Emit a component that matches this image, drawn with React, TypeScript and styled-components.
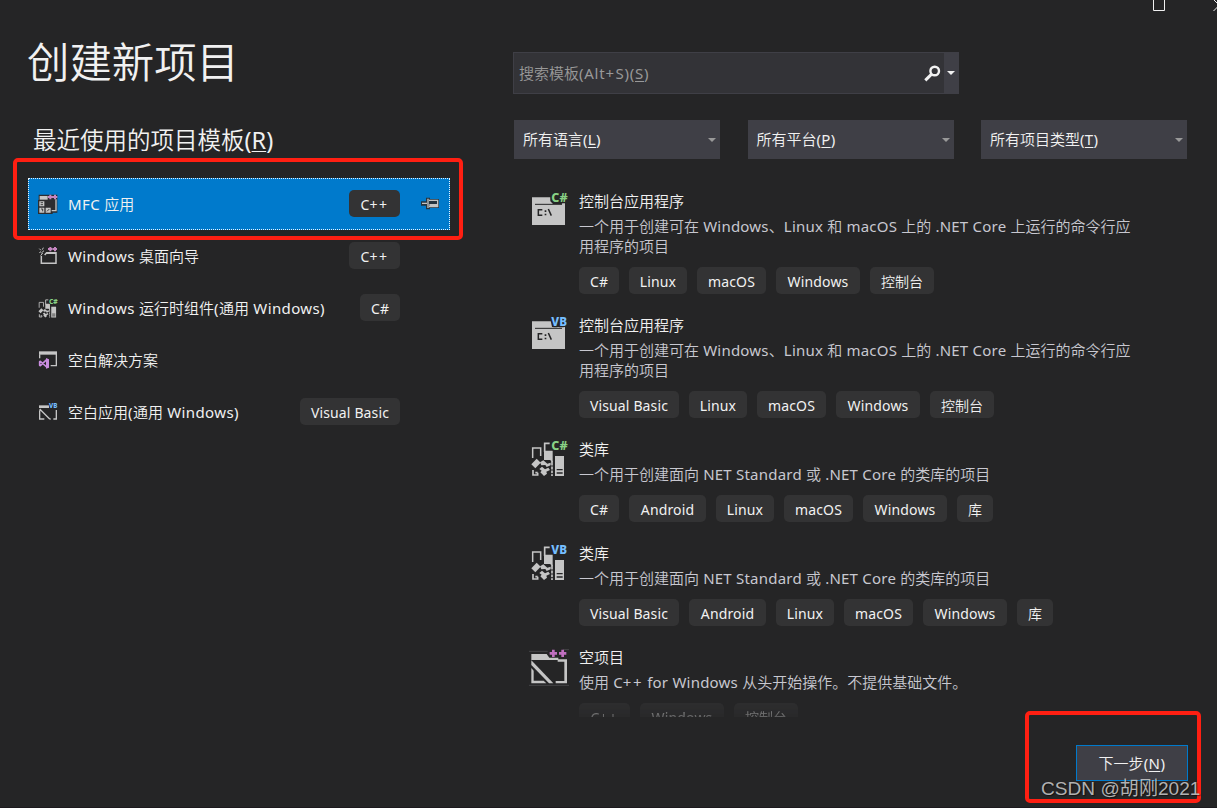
import React from "react";
import styled, { createGlobalStyle } from "styled-components";

const Global = createGlobalStyle`
  * { box-sizing: border-box; }
  body { margin: 0; background: #252526; overflow: hidden; }
`;

const Window = styled.div`
  position: relative;
  width: 1217px;
  height: 808px;
  overflow: hidden;
  background: #252526;
  border-bottom: 1px solid #1d1a1e;
  color: #f1f1f1;
  font-family: "Noto Sans", "Noto Sans CJK SC", sans-serif;
  font-size: 15px;
  line-height: 20px;
  white-space: nowrap;
  display: grid;
  grid-template-columns: 513px 1fr;
`;

const LatinRun = styled.span`
  letter-spacing: var(--latin-spacing, 0.024em);
`;

const PlusRun = styled.span`
  letter-spacing: 0.1em;
`;

const Han = styled.span`
  font-family: "Noto Sans CJK SC", sans-serif;
  font-weight: 350;
  line-height: 0;
`;

const Text = ({ children }: { children: string }) => (
  <span>
    {(children.match(/\++|[\x00-\x2a\x2c-\x7f]+|[^\x00-\x7f]+/g) || []).map((run, i) =>
      run[0] === "+" ? (
        <PlusRun key={i}>{run}</PlusRun>
      ) : /^[\x00-\x7f]/.test(run) ? (
        <LatinRun key={i}>{run}</LatinRun>
      ) : (
        <Han key={i}>{run}</Han>
      )
    )}
  </span>
);

const AccessKey = styled.span`
  text-decoration: underline;
  text-decoration-thickness: 1px;
  text-underline-offset: 2px;
`;

const LabelText = styled.span`
  letter-spacing: var(--label-spacing, 0);
`;

const Label = ({ text, hotkey }: { text: string; hotkey: string }) => (
  <span>
    <Text>{text}</Text>
    <LabelText>(<AccessKey>{hotkey}</AccessKey>)</LabelText>
  </span>
);

const LeftPane = styled.section`
  padding: 32px 0 0 28px;
`;

const Title = styled.h1`
  margin: 0 0 0 -1px;
  height: 60px;
  font-size: 42.4px;
  line-height: 60px;
  font-weight: 400;
`;

const Subtitle = styled.h2`
  margin: 32px 0 0 5px;
  height: 32px;
  font-size: 23.5px;
  line-height: 32px;
  font-weight: 400;
`;

const RecentList = styled.div`
  margin-top: 22px;
  width: 422px;
`;

const Tag = styled.span<{ $width: number }>`
  --latin-spacing: 0.01em;
  display: inline-flex;
  align-items: center;
  justify-content: center;
  width: ${(p) => p.$width}px;
  height: 27px;
  border-radius: 5px;
  background: #333334;
  font-size: 14px;
  padding-top: 3px;
`;

const RecentRow = styled.div<{ $selected?: boolean }>`
  display: flex;
  align-items: center;
  height: 52px;
  padding: 0 10px;
  background: ${(p) => (p.$selected ? "#007acc" : "transparent")};
  outline: ${(p) => (p.$selected ? "1px dotted #e8f4ff" : "none")};
  outline-offset: -1px;

  ${Tag} {
    margin-bottom: 1px;
  }
`;

const RecentName = styled.span`
  --latin-spacing: 0.026em;
  flex: 1;
  margin-left: 10px;
`;

const PinSlot = styled.span`
  width: 40px;
  height: 20px;
  padding: 3px 0 0 21px;
  display: flex;
`;

const TAG_WIDTHS: Record<string, number> = {
  "C#": 40,
  "C++": 51,
  Linux: 58,
  macOS: 69,
  Windows: 84,
  Android: 77,
  "Visual Basic": 100,
  控制台: 64,
  库: 36,
};

const TagChip = ({ name }: { name: string }) => (
  <Tag $width={TAG_WIDTHS[name]}>
    <Text>{name}</Text>
  </Tag>
);

const RightPane = styled.section`
  padding-top: 52px;
`;

const SearchBox = styled.div`
  display: flex;
  width: 446px;
  height: 42px;
  border: 1px solid #3f3f46;
  background: #333337;
  color: #999999;
  align-items: center;
  padding-left: 5px;
`;

const SearchText = styled.span`
  --latin-spacing: 0.05em;
  --label-spacing: 0.05em;
  flex: 1;
`;

const SearchDrop = styled.span`
  width: 14px;
  height: 40px;
  margin-left: 3px;
  background: #3f3f46;
  display: flex;
  align-items: center;
  justify-content: center;
`;

const Caret = styled.i<{ $color: string }>`
  border: 4px solid transparent;
  border-top-color: ${(p) => p.$color};
  border-bottom: 0;
`;

const Filters = styled.div`
  --label-spacing: 0.02em;
  display: grid;
  grid-template-columns: 206px 206px 206px;
  column-gap: 27.5px;
  margin: 26px 0 0 1px;
`;

const Combo = styled.div`
  display: flex;
  align-items: center;
  justify-content: space-between;
  height: 39px;
  padding: 0 4px 0 9px;
  background: #3f3f46;

  > span {
    margin-bottom: 1px;
  }
`;

const TemplateList = styled.div`
  height: 526px;
  margin-top: 32px;
  padding-left: 17px;
  overflow: hidden;
`;

const TemplateItem = styled.article`
  display: flex;
  margin-bottom: 21px;
`;

const IconSlot = styled.div`
  width: 49px;
  height: 40px;
  margin-top: -1px;
`;

const TemplateName = styled.div`
  height: 20px;
`;

const Description = styled.div`
  --latin-spacing: 0.015em;
  margin-top: 5px;
  color: #c8c8d0;
`;

const TagRow = styled.div<{ $faded?: boolean }>`
  display: flex;
  gap: 10px;
  margin-top: 11px;
  ${(p) => p.$faded && "mask-image: linear-gradient(rgba(0,0,0,.6), rgba(0,0,0,.28) 15px);"}
`;

const NextButton = styled.button`
  --label-spacing: 0.03em;
  position: absolute;
  left: 1076px;
  top: 745px;
  width: 112px;
  height: 36px;
  padding: 0;
  border: 1px solid #007acc;
  background: #3f3f46;
  color: #f1f1f1;
  font: inherit;
`;

const Marker = styled.div<{ $x: number; $y: number; $w: number; $h: number }>`
  position: absolute;
  left: ${(p) => p.$x}px;
  top: ${(p) => p.$y}px;
  width: ${(p) => p.$w}px;
  height: ${(p) => p.$h}px;
  border: 4px solid #ff1f12;
  border-radius: 5px;
`;

const Watermark = styled.div`
  position: absolute;
  left: 1041px;
  top: 777px;
  color: rgba(205, 205, 205, 0.85);
  font: 19.1px/24px "Liberation Sans", "Noto Sans CJK SC", sans-serif;
  text-shadow: 1px 1px 1px rgba(0, 0, 0, 0.5);
`;

const WindowControls = styled.svg`
  position: absolute;
  right: 0;
  top: 0;
`;

const G = "#c5c5c5";
const BG = "#252526";

const Small = ({ box, children }: { box: string; children: React.ReactNode }) => (
  <svg width="20" height="20" viewBox={box} overflow="visible">{children}</svg>
);
const Large = ({ box, children }: { box: string; children: React.ReactNode }) => (
  <svg width="40" height="40" viewBox={box} overflow="visible">{children}</svg>
);

const Badge = ({ x, y, size, width, text, color }: { x: number; y: number; size: number; width: number; text: string; color: string }) => (
  <text x={x} y={y} fontSize={size} textLength={width} lengthAdjust="spacingAndGlyphs" fontFamily="Noto Sans" fontWeight="800"
    fill={color} stroke={BG} strokeWidth={size / 5} paintOrder="stroke">{text}</text>
);

const LangBadge = ({ lang, y }: { lang: string; y: number }) =>
  lang === "C#" ? (
    <Badge x={94} y={y} size={38} width={49} text="C#" color="#89d185" />
  ) : (
    <Badge x={94} y={y} size={38} width={47} text="VB" color="#75beff" />
  );

const MfcIcon = () => (
  <Small box="114 132 60 60">
    <path d="M116 134h56v54h-14v4h-44v-42h2z" fill="#2d2d30" />
    <path d="M119 138h24v11h-24z" fill={G} />
    <path d="M168 148v34h-13" fill="none" stroke={G} strokeWidth="4" />
    <path d="M118 154h15v15h-15zM118 173h15v15h-15zM137 173h15v15h-15z" fill={G} />
    <path d="M122 158h7M122 164h7M123 177h5v7M141 184l7-7" fill="none" stroke={BG} strokeWidth="2.5" />
    <path d="M151 134v14M144 141h14M165 134v14M158 141h14" stroke="#c586c0" strokeWidth="6" />
  </Small>
);

const WizardIcon = () => (
  <Small box="114 288 60 60">
    <path d="M124 318v22h44v-32h-28l-6 7M140 310h28" fill="none" stroke={G} strokeWidth="4.5" />
    <path d="M118 296l5 5M130 293l-3 6M118 308l5-3M132 302l-8 7M128 309l-6 8" stroke={G} strokeWidth="3" />
    <path d="M151 291v13M144 297h13M165 291v13M158 297h13" stroke="#c586c0" strokeWidth="6" />
  </Small>
);

const LibraryShape = () => (
  <>
    <path d="M38 84V54h24v24" fill="none" stroke={G} strokeWidth="4.5" />
    <path d="M74 66V40h15" fill="none" stroke={G} strokeWidth="5" />
    <path d="M72 62h26v34l-8-6H72z" fill={G} />
    <path d="M105 78h27v60h-27z" fill={G} />
    <path d="M110 119h18M110 129h18" stroke={BG} strokeWidth="4" />
    <path d="M34 103l16-17 12 12-16 17z" fill={G} />
    <path d="M60 97l10-6 12 10 10-3v8l-12 5-4-6-12 1z" fill={G} />
    <path d="M58 117l8-7 9 8 10-5 5 7-11 5 2 6-9 7-11-11 4-5z" fill={G} />
    <path d="M39 120v15h14v-7M46 128h7M96 92v46" fill="none" stroke={G} strokeWidth="5" />
    <path d="M92 108h8M92 120h8M92 131h8" stroke={BG} strokeWidth="3" />
  </>
);

const ComponentIcon = () => (
  <Small box="54 39 60 60">
    <g transform="translate(37 23) scale(.54)"><LibraryShape /></g>
    <Badge x={87} y={56} size={21} width={26} text="C#" color="#89d185" />
  </Small>
);

const SolutionIcon = () => (
  <Small box="54 195 60 60">
    <path d="M57 199h54v10H57z" fill={G} />
    <path d="M59 208v12M109 206v36H92" fill="none" stroke={G} strokeWidth="4" />
    <path d="M80 224L61 242l-2-1v-11l2-1 19 17" fill="none" stroke="#ca8de0" strokeWidth="5" strokeLinejoin="round" />
    <path d="M78 219l9 4v25l-9 3z" fill="#ca8de0" />
  </Small>
);

const BlankAppIcon = () => (
  <Small box="54 351 60 60">
    <path d="M57 361h30v8H57z" fill={G} />
    <path d="M59 376v26h14M59 372l30 30M89 402h3M100 402h9v-27" fill="none" stroke={G} strokeWidth="4" />
    <Badge x={87} y={368} size={21} width={25} text="VB" color="#75beff" />
  </Small>
);

const ConsoleIcon = ({ lang }: { lang: string }) => (
  <Large box="30 30 120 120">
    <path d="M36 52h99v83H36z" fill={G} />
    <path d="M45 73h81" stroke={BG} strokeWidth="3" />
    <path d="M67 89H55v17h12M85 87l9 20" fill="none" stroke={BG} strokeWidth="4.5" />
    <path d="M74 91h5v5h-5zM74 101h5v5h-5z" fill={BG} />
    <path d={lang === "VB" ? "M91 45h50v24H96z" : "M91 45h50v22h-12l-4 5h-26l-8-8z"} fill={BG} />
    <LangBadge lang={lang} y={66} />
  </Large>
);

const LibraryIcon = ({ lang }: { lang: string }) => (
  <Large box="30 24 120 120">
    <LibraryShape />
    <LangBadge lang={lang} y={59} />
  </Large>
);

const EmptyIcon = () => (
  <Large box="30 48 120 120">
    <path d="M27 64h56M130 59h17M27 166h120" stroke="#454547" strokeWidth="3" />
    <path d="M34 72h46l8 11h27v7H34z" fill={G} />
    <path d="M130 88h11v72h-34v-7h26V95h-20v-7zM34 114l7 8v30h30l8 8H34z" fill={G} />
    <path d="M34 91l66 69H87L34 105z" fill={G} />
    <path d="M100 59v22M89 70h22M128 59v22M117 70h22" stroke="#c06fc0" strokeWidth="8" />
  </Large>
);

const PinIcon = () => (
  <svg width="18" height="13" viewBox="543 141 54 39">
    <path d="M543 154h15v-11h12v4h27v27h-27v4h-12v-11h-15z" fill="#26343f" />
    <path d="M546 160h15M564 146v28M567 151h26v19h-26" fill="none" stroke={G} strokeWidth="4" />
    <path d="M568 162h25v8h-25z" fill={G} />
  </svg>
);

const recent = [
  { name: "MFC 应用", tag: "C++", icon: <MfcIcon />, selected: true },
  { name: "Windows 桌面向导", tag: "C++", icon: <WizardIcon /> },
  { name: "Windows 运行时组件(通用 Windows)", tag: "C#", icon: <ComponentIcon /> },
  { name: "空白解决方案", icon: <SolutionIcon /> },
  { name: "空白应用(通用 Windows)", tag: "Visual Basic", icon: <BlankAppIcon /> },
];

const consoleText = ["一个用于创建可在 Windows、Linux 和 macOS 上的 .NET Core 上运行的命令行应", "用程序的项目"];
const libraryText = ["一个用于创建面向 NET Standard 或 .NET Core 的类库的项目"];

const templates = [
  { name: "控制台应用程序", lines: consoleText, tags: ["C#", "Linux", "macOS", "Windows", "控制台"], icon: <ConsoleIcon lang="C#" /> },
  { name: "控制台应用程序", lines: consoleText, tags: ["Visual Basic", "Linux", "macOS", "Windows", "控制台"], icon: <ConsoleIcon lang="VB" /> },
  { name: "类库", lines: libraryText, tags: ["C#", "Android", "Linux", "macOS", "Windows", "库"], icon: <LibraryIcon lang="C#" /> },
  { name: "类库", lines: libraryText, tags: ["Visual Basic", "Android", "Linux", "macOS", "Windows", "库"], icon: <LibraryIcon lang="VB" /> },
  { name: "空项目", lines: ["使用 C++ for Windows 从头开始操作。不提供基础文件。"], tags: ["C++", "Windows", "控制台"], icon: <EmptyIcon />, faded: true },
];

const filters = [
  { text: "所有语言", hotkey: "L" },
  { text: "所有平台", hotkey: "P" },
  { text: "所有项目类型", hotkey: "T" },
];

export default function App() {
  return (
    <Window>
      <Global />
      <LeftPane>
        <Title><Text>创建新项目</Text></Title>
        <Subtitle><Label text="最近使用的项目模板" hotkey="R" /></Subtitle>
        <RecentList>
          {recent.map((r) => (
            <RecentRow key={r.name} $selected={r.selected}>
              {r.icon}
              <RecentName><Text>{r.name}</Text></RecentName>
              {r.tag && <TagChip name={r.tag} />}
              <PinSlot>{r.selected && <PinIcon />}</PinSlot>
            </RecentRow>
          ))}
        </RecentList>
      </LeftPane>
      <RightPane>
        <SearchBox>
          <SearchText><Label text="搜索模板(Alt+S)" hotkey="S" /></SearchText>
          <svg width="17" height="17" viewBox="0 0 17 17">
            <circle cx="10.7" cy="6" r="4.3" fill="none" stroke="#f1f1f1" strokeWidth="2.4" />
            <path d="M7.6 9.2L1.3 15.3" stroke="#f1f1f1" strokeWidth="3" />
          </svg>
          <SearchDrop><Caret $color="#f1f1f1" /></SearchDrop>
        </SearchBox>
        <Filters>
          {filters.map((f) => (
            <Combo key={f.hotkey}>
              <Label {...f} />
              <Caret $color="#999999" />
            </Combo>
          ))}
        </Filters>
        <TemplateList>
          {templates.map((t, i) => (
            <TemplateItem key={i}>
              <IconSlot>{t.icon}</IconSlot>
              <div>
                <TemplateName><Text>{t.name}</Text></TemplateName>
                <Description>
                  {t.lines.map((l) => <div key={l}><Text>{l}</Text></div>)}
                </Description>
                <TagRow $faded={t.faded}>
                  {t.tags.map((tag) => <TagChip key={tag} name={tag} />)}
                </TagRow>
              </div>
            </TemplateItem>
          ))}
        </TemplateList>
      </RightPane>
      <WindowControls width="70" height="16" viewBox="0 0 70 16">
        <path d="M6.5 -2v12.5h11V-2" fill="none" stroke="#f1f1f1" />
        <path d="M66.5 11L78 -0.5M66.5 -0.5L78 11" stroke="#f1f1f1" />
      </WindowControls>
      <NextButton><Label text="下一步" hotkey="N" /></NextButton>
      <Marker $x={13} $y={158} $w={450} $h={82} />
      <Marker $x={1025} $y={711} $w={176} $h={92} />
      <Watermark>CSDN @胡刚2021</Watermark>
    </Window>
  );
}
